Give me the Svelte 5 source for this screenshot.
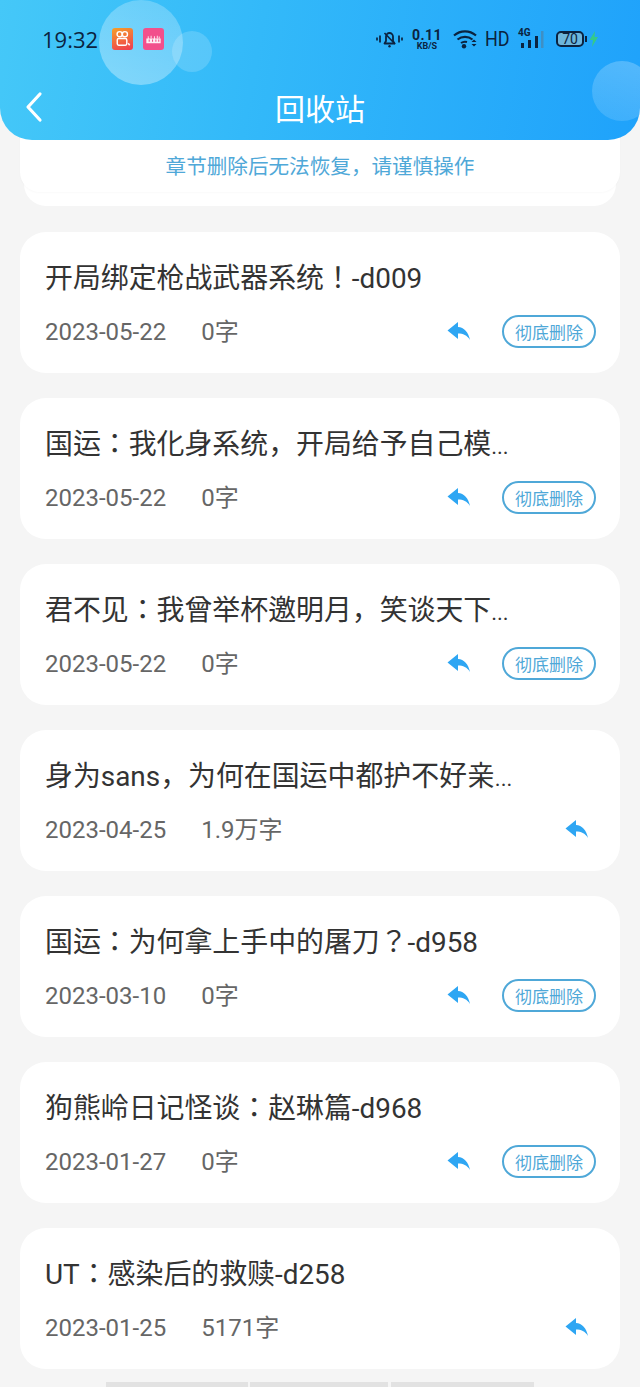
<script>
  const items = [
    { title: '开局绑定枪战武器系统！-d009', date: '2023-05-22', count: '0字', del: true },
    { title: '国运：我化身系统，开局给予自己模', more: true, date: '2023-05-22', count: '0字', del: true },
    { title: '君不见：我曾举杯邀明月，笑谈天下', more: true, date: '2023-05-22', count: '0字', del: true },
    { title: '身为sans，为何在国运中都护不好亲', more: true, date: '2023-04-25', count: '1.9万字', del: false },
    { title: '国运：为何拿上手中的屠刀？-d958', date: '2023-03-10', count: '0字', del: true },
    { title: '狗熊岭日记怪谈：赵琳篇-d968', date: '2023-01-27', count: '0字', del: true },
    { title: 'UT：感染后的救赎-d258', date: '2023-01-25', count: '5171字', del: false }
  ];
</script>

<div class="page">
  <header class="header">
    <span class="bubble big"></span>
    <span class="bubble small"></span>
    <span class="bubble right"></span>

    <div class="status">
      <span class="time">19:32</span>
      <span class="app kwai">
        <svg viewBox="0 0 22 22" width="22" height="22">
          <circle cx="8" cy="6" r="2.700" fill="none" stroke="#fff" stroke-width="1.500" />
          <circle cx="13.500" cy="6" r="2.700" fill="none" stroke="#fff" stroke-width="1.500" />
          <rect x="5.500" y="10.500" width="10" height="7" rx="1.500" fill="none" stroke="#fff" stroke-width="1.500" />
          <path d="M17 15.500l1.500 2" stroke="#fff" stroke-width="1.500" />
        </svg>
      </span>
      <span class="app pink">
        <svg viewBox="0 0 22 22" width="22" height="22">
          <path d="M3.500 10.500h15v5h-15z" fill="#fff" opacity="0.9" />
          <path d="M5.500 8v3M8.500 7.500v3M12 8v3M15 7.500v3M17 8.500v2" stroke="#fff" stroke-width="1.100" opacity="0.8" />
          <path d="M6.500 11.500v2.500M10 11.500v2.500M13.500 11.500v2.500M16.500 11.500v2.500" stroke="#ee4f88" stroke-width="1.100" />
        </svg>
      </span>
      <span class="spacer"></span>
      <svg class="bell" viewBox="0 0 27 20" width="27" height="20">
        <path d="M8.500 14.500h10l-1.500-2.500V7.500a3.500 3.500 0 0 0-7 0V12z" fill="none" stroke="#0b2340" stroke-width="1.800" stroke-linejoin="round" />
        <path d="M8.500 4l10.500 11" stroke="#0b2340" stroke-width="1.600" />
        <circle cx="13.500" cy="17.300" r="1.200" fill="#0b2340" />
        <path d="M1 8.500v3M4 6.500v7M23 6.500v7M26 8.500v3" stroke="#0b2340" stroke-width="1.700" />
      </svg>
      <span class="speed"><b>0.11</b><small>KB/S</small></span>
      <svg class="wifi" viewBox="0 0 25 20" width="25" height="20">
        <path d="M1 6.500c6.500-5.500 15.500-5.500 22 0" fill="none" stroke="#0b2340" stroke-width="2.200" />
        <path d="M4.500 10.500c4.500-3.500 10.500-3.500 15 0" fill="none" stroke="#0b2340" stroke-width="2.200" />
        <path d="M8 14c2-1.400 4-1.600 6-1" fill="none" stroke="#0b2340" stroke-width="2" />
        <circle cx="11" cy="17.300" r="2.200" fill="#0b2340" />
        <path d="M18.500 13l2.500-2.500 2.500 2.500zM18.500 15l2.500 2.500 2.500-2.500z" fill="#0b2340" />
      </svg>
      <span class="hd">HD</span>
      <span class="signal">
        <i class="four">4G</i>
        <svg viewBox="0 0 26 18" width="26" height="18">
          <rect x="3" y="12" width="3" height="5" fill="#0b2340" />
          <rect x="10" y="9" width="3" height="8" fill="#0b2340" />
          <rect x="17" y="5" width="3" height="12" fill="#0b2340" />
          <rect x="23" y="0" width="2.500" height="17" fill="#3f8fc4" />
        </svg>
      </span>
      <span class="battery"><span class="level">70</span></span>
      <svg class="bolt" viewBox="0 0 11 18" width="11" height="18">
        <path d="M7 1L1.500 10H5l-1 7 6-10H6.500z" fill="#35c98a" />
      </svg>
    </div>

    <div class="nav">
      <svg class="back" viewBox="0 0 20 32" width="20" height="32">
        <path d="M16 3L4 16l12 13" fill="none" stroke="#fff" stroke-width="3.200" stroke-linecap="round" stroke-linejoin="round" />
      </svg>
      <h1>回收站</h1>
    </div>
  </header>

  <div class="notice-wrap">
    <div class="notice">章节删除后无法恢复，请谨慎操作</div>
  </div>

  <div class="list">
    {#each items as item}
      <div class="card">
        <div class="title">{item.title}{#if item.more}<span class="dots">...</span>{/if}</div>
        <div class="meta">
          <span class="date">{item.date}</span>
          <span class="count">{item.count}</span>
          <span class="actions" class:only={!item.del}>
            <svg class="restore" viewBox="0 0 24 20" width="24" height="20">
              <path d="M.5 9.500L11 1v5c6 .5 10.500 5 12 13-3-5-7-6.500-12-6.500V18z" fill="#2ea6f3" />
            </svg>
            {#if item.del}
              <button class="del">彻底删除</button>
            {/if}
          </span>
        </div>
      </div>
    {/each}
  </div>

  <div class="bottom">
    <span></span><span></span><span></span>
  </div>
</div>

<style>
  :global(body) {
    background: #f5f5f5;
  }

  .page {
    height: 1387px;
    overflow: hidden;
    background: #f5f5f5;
    font-family: Roboto, "Noto Sans CJK SC", sans-serif;
  }

  .header {
    position: relative;
    z-index: 2;
    height: 140px;
    overflow: hidden;
    border-radius: 0 0 32px 32px;
    background: linear-gradient(100deg, #45c8f8 0%, #33b9f9 40%, #1fa2fb 100%);
  }

  .bubble {
    position: absolute;
    border-radius: 50%;
  }

  .big {
    left: 99px;
    top: 0;
    width: 84px;
    height: 85px;
    background: linear-gradient(200deg, rgba(255, 255, 255, 0.22), rgba(255, 255, 255, 0.36));
  }

  .small {
    left: 172px;
    top: 31px;
    width: 40px;
    height: 41px;
    background: rgba(255, 255, 255, 0.17);
  }

  .right {
    left: 592px;
    top: 61px;
    width: 60px;
    height: 60px;
    background: linear-gradient(200deg, rgba(255, 255, 255, 0.24), rgba(255, 255, 255, 0.12));
  }

  .status {
    position: relative;
    display: flex;
    align-items: center;
    height: 28px;
    padding: 25px 41px 0 42px;
    color: #0b2340;
  }

  .time {
    font-size: 22px;
    margin-right: 14px;
    font-family: "Open Sans", sans-serif;
  }

  .app {
    display: flex;
    width: 21px;
    height: 22px;
    border-radius: 3px;
    margin-right: 10px;
  }

  .kwai {
    background: linear-gradient(160deg, #f6a028, #ee3a52);
  }

  .pink {
    background: #f2508c;
  }

  .spacer {
    flex: 1;
  }

  .speed {
    display: flex;
    flex-direction: column;
    align-items: center;
    width: 28px;
    margin: 0 12px 0 10px;
    line-height: 1;
  }

  .speed b {
    font-size: 14px;
    letter-spacing: 0.5px;
  }

  .speed small {
    font-size: 9px;
    font-weight: 700;
  }

  .hd {
    width: 24px;
    font-size: 20px;
    margin: 0 9px 0 7px;
    transform: scaleX(0.9);
    transform-origin: left;
  }

  .signal {
    position: relative;
    width: 26px;
    height: 18px;
    margin-right: 12px;
  }

  .signal svg {
    position: absolute;
    left: 0;
    top: 1px;
  }

  .four {
    position: absolute;
    left: 0;
    top: -3px;
    font-size: 10px;
    font-style: normal;
    font-weight: 700;
  }

  .battery {
    display: flex;
    align-items: center;
    justify-content: center;
    position: relative;
    box-sizing: border-box;
    width: 28px;
    height: 16px;
    border: 2px solid #0b2340;
    border-radius: 5px;
    background: #6db6dc;
  }

  .battery::after {
    content: '';
    position: absolute;
    right: -5px;
    top: 3px;
    width: 2px;
    height: 6px;
    background: #0b2340;
  }

  .level {
    font-size: 14px;
    line-height: 1;
  }

  .bolt {
    margin-left: 4px;
  }

  .nav {
    position: relative;
    display: flex;
    justify-content: center;
    align-items: center;
    height: 50px;
    margin-top: 29px;
  }

  .back {
    position: absolute;
    left: 24px;
    top: 9px;
  }

  h1 {
    margin: 0;
    color: #fff;
    font-size: 30px;
    font-weight: 400;
  }

  .notice-wrap {
    position: relative;
    margin: -20px 20px 0;
    height: 86px;
  }

  .notice-wrap::after {
    content: '';
    position: absolute;
    left: 4px;
    right: 4px;
    top: 40px;
    bottom: 0;
    border-radius: 0 0 22px 22px;
    background: #fff;
  }

  .notice {
    position: relative;
    z-index: 1;
    height: 72px;
    padding-top: 20px;
    box-sizing: border-box;
    line-height: 54px;
    text-align: center;
    color: #4fa8d8;
    font-size: 20.600px;
    background: #fff;
    border-radius: 0 0 20px 20px;
    box-shadow: 0 1px 2px rgba(0, 0, 0, 0.025);
  }

  .list {
    display: flex;
    flex-direction: column;
    gap: 25px;
    margin: 26px 20px 0;
  }

  .card {
    height: 141px;
    box-sizing: border-box;
    padding: 26px 24px 0 25px;
    background: #fff;
    border-radius: 26px;
  }

  .title {
    height: 42px;
    color: #333;
    font-family: Roboto, "Noto Sans CJK JP", sans-serif;
    font-size: 27.900px;
    line-height: 42px;
    white-space: nowrap;
  }

  .dots {
    font-size: 22px;
    line-height: 1;
  }

  .meta {
    display: flex;
    align-items: center;
    margin-top: 14px;
    height: 34px;
    color: #666;
    font-size: 24px;
    line-height: 34px;
  }

  .date {
    margin-right: 35px;
    padding-top: 2px;
  }

  .count {
    padding-top: 2px;
  }

  .actions {
    display: flex;
    align-items: center;
    margin-left: auto;
  }

  .actions.only {
    margin-right: 7px;
  }

  .restore {
    display: block;
  }

  .del {
    width: 94px;
    height: 33px;
    margin-left: 31px;
    padding: 0;
    border: 2px solid #4fa8d8;
    border-radius: 17px;
    background: #fff;
    color: #4fa8d8;
    font-family: "Noto Sans CJK SC", sans-serif;
    font-size: 17px;
  }

  .bottom {
    display: flex;
    gap: 2px;
    margin: 13px 0 0 106px;
    height: 5px;
  }

  .bottom span {
    width: 142px;
    background: #e2e2e2;
  }

  .bottom span:nth-child(2) {
    width: 138px;
  }

  .bottom span:nth-child(3) {
    width: 143px;
    margin-left: 1px;
  }
</style>
